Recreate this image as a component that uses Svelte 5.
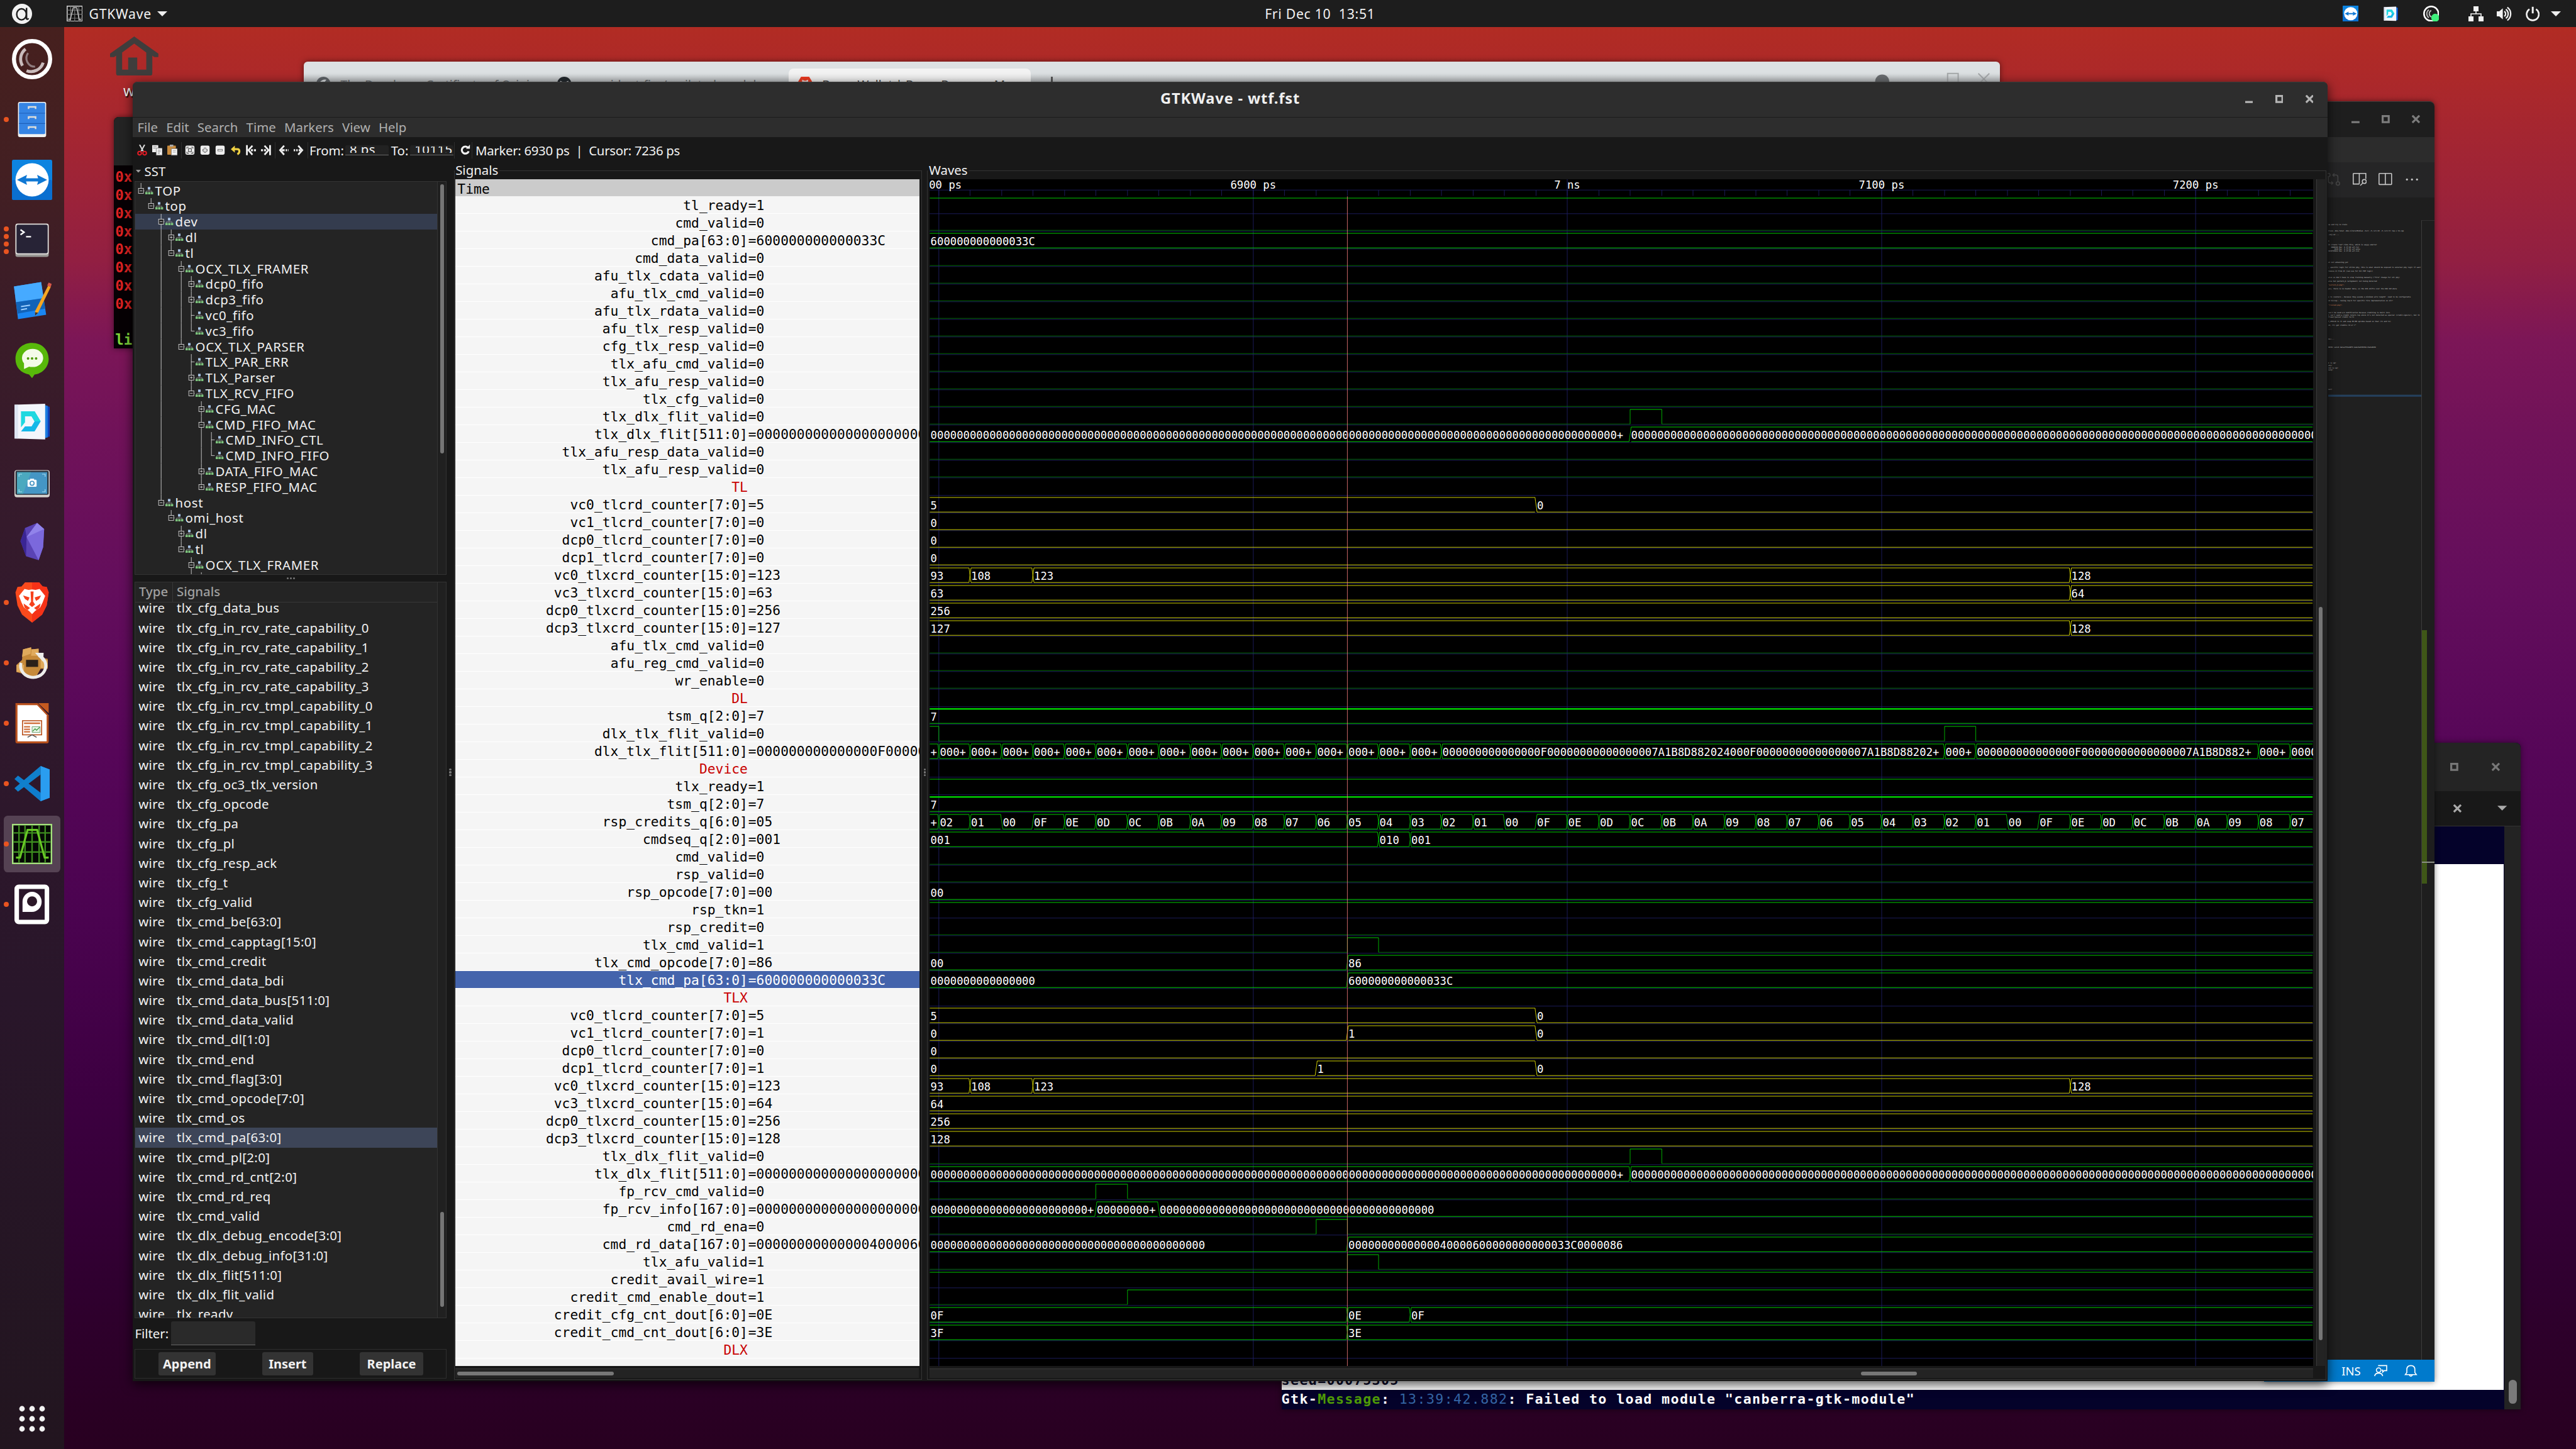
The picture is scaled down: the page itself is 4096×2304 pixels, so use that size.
<script>
  const dock = [
    { icon: 'ring', dots: 0 },
    { icon: 'files', dots: 1 },
    { icon: 'teamviewer', dots: 0 },
    { icon: 'terminal', dots: 4 },
    { icon: 'editor', dots: 0 },
    { icon: 'chat', dots: 0 },
    { icon: 'docs', dots: 0 },
    { icon: 'screenshot', dots: 0 },
    { icon: 'crystal', dots: 0 },
    { icon: 'brave', dots: 1 },
    { icon: 'packages', dots: 1 },
    { icon: 'impress', dots: 1 },
    { icon: 'vscode', dots: 1 },
    { icon: 'gtkwave', dots: 1, active: true },
    { icon: 'pbox', dots: 1 }
  ];

  const menus = ['File', 'Edit', 'Search', 'Time', 'Markers', 'View', 'Help'];

  // depth, kind (+ collapsed, - expanded, . leaf), name
  const tree = [
    [0, '-', 'TOP'], [1, '-', 'top'], [2, '-', 'dev'], [3, '+', 'dl'], [3, '-', 'tl'],
    [4, '-', 'OCX_TLX_FRAMER'], [5, '+', 'dcp0_fifo'], [5, '+', 'dcp3_fifo'], [5, '.', 'vc0_fifo'],
    [5, '.', 'vc3_fifo'], [4, '-', 'OCX_TLX_PARSER'], [5, '.', 'TLX_PAR_ERR'], [5, '+', 'TLX_Parser'],
    [5, '-', 'TLX_RCV_FIFO'], [6, '+', 'CFG_MAC'], [6, '-', 'CMD_FIFO_MAC'], [7, '.', 'CMD_INFO_CTL'],
    [7, '.', 'CMD_INFO_FIFO'], [6, '+', 'DATA_FIFO_MAC'], [6, '+', 'RESP_FIFO_MAC'], [2, '-', 'host'],
    [3, '-', 'omi_host'], [4, '+', 'dl'], [4, '-', 'tl'], [5, '-', 'OCX_TLX_FRAMER'],
    [6, '+', 'dcp0_fifo'], [5, '-', 'OCX_TLX_PARSER']
  ];
  const continues = (i, level) => {
    for (let j = i + 1; j < tree.length; j++) {
      if (tree[j][0] < level) return false;
      if (tree[j][0] === level) return true;
    }
    return false;
  };
  const treeRows = tree.slice(0, 26).map(([depth, kind, name], i) => {
    const guides = [];
    for (let l = 0; l < depth; l++) if (continues(i, l)) guides.push(11 + 20 * l);
    return { depth, kind, name, guides, more: continues(i, depth), x: 11 + 20 * depth };
  });

  const wires = [
    'tlx_cfg_data_bus', 'tlx_cfg_in_rcv_rate_capability_0', 'tlx_cfg_in_rcv_rate_capability_1',
    'tlx_cfg_in_rcv_rate_capability_2', 'tlx_cfg_in_rcv_rate_capability_3',
    'tlx_cfg_in_rcv_tmpl_capability_0', 'tlx_cfg_in_rcv_tmpl_capability_1',
    'tlx_cfg_in_rcv_tmpl_capability_2', 'tlx_cfg_in_rcv_tmpl_capability_3', 'tlx_cfg_oc3_tlx_version',
    'tlx_cfg_opcode', 'tlx_cfg_pa', 'tlx_cfg_pl', 'tlx_cfg_resp_ack', 'tlx_cfg_t', 'tlx_cfg_valid',
    'tlx_cmd_be[63:0]', 'tlx_cmd_capptag[15:0]', 'tlx_cmd_credit', 'tlx_cmd_data_bdi',
    'tlx_cmd_data_bus[511:0]', 'tlx_cmd_data_valid', 'tlx_cmd_dl[1:0]', 'tlx_cmd_end',
    'tlx_cmd_flag[3:0]', 'tlx_cmd_opcode[7:0]', 'tlx_cmd_os', 'tlx_cmd_pa[63:0]', 'tlx_cmd_pl[2:0]',
    'tlx_cmd_rd_cnt[2:0]', 'tlx_cmd_rd_req', 'tlx_cmd_valid', 'tlx_dlx_debug_encode[3:0]',
    'tlx_dlx_debug_info[31:0]', 'tlx_dlx_flit[511:0]', 'tlx_dlx_flit_valid', 'tlx_ready'
  ];

  const z = (n) => '0'.repeat(n);
  const START = 6797.1;
  const bit = (name, value, ...edges) => ({ name, value, kind: 'bit', edges });
  // cells: [time, text, zero?]
  const bus = (name, value, cells, color = 'g') => ({ name, value, kind: 'bus', cells, color });
  const group = (name) => ({ name, kind: 'group' });
  const S = START;

  const flitCells = [[S, '+']];
  for (let t = 6800; t < 6960; t += 10) flitCells.push([t, '000+']);
  flitCells.push(
    [6960, z(15) + 'F' + z(16) + '7A1B8D882024000F' + z(16) + '7A1B8D88202+'],
    [7120, '000+'], [7130, z(15) + 'F' + z(16) + '7A1B8D882+'], [7220, '000+'], [7230, '0000']
  );
  const creditCells = [[S, '+']];
  for (let k = 0; k < 44; k++) {
    const v = (((2 - k) % 16) + 16) % 16;
    creditCells.push([6800 + 10 * k, '0' + v.toString(16).toUpperCase(), v === 0]);
  }
  const crd123 = [[S, '93'], [6810, '108'], [6830, '123'], [7160, '128']];
  const crd5 = [[S, '5'], [6990, '0', true]];
  const flitOut = (firstZero) => [[S, z(105) + '+', firstZero], [7020, z(110)]];

  const signals = [
    bit('tl_ready', '1', [S, 1]),
    bit('cmd_valid', '0', [S, 0]),
    bus('cmd_pa[63:0]', '6' + z(12) + '33C', [[S, '6' + z(12) + '33C']]),
    bit('cmd_data_valid', '0', [S, 0]),
    bit('afu_tlx_cdata_valid', '0', [S, 0]),
    bit('afu_tlx_cmd_valid', '0', [S, 0]),
    bit('afu_tlx_rdata_valid', '0', [S, 0]),
    bit('afu_tlx_resp_valid', '0', [S, 0]),
    bit('cfg_tlx_resp_valid', '0', [S, 0]),
    bit('tlx_afu_cmd_valid', '0', [S, 0]),
    bit('tlx_afu_resp_valid', '0', [S, 0]),
    bit('tlx_cfg_valid', '0', [S, 0]),
    bit('tlx_dlx_flit_valid', '0', [S, 0], [7020, 1], [7030, 0]),
    bus('tlx_dlx_flit[511:0]', z(30), flitOut(true)),
    bit('tlx_afu_resp_data_valid', '0', [S, 0]),
    bit('tlx_afu_resp_valid', '0', [S, 0]),
    group('TL'),
    bus('vc0_tlcrd_counter[7:0]', '5', crd5, 'y'),
    bus('vc1_tlcrd_counter[7:0]', '0', [[S, '0', true]], 'y'),
    bus('dcp0_tlcrd_counter[7:0]', '0', [[S, '0', true]], 'y'),
    bus('dcp1_tlcrd_counter[7:0]', '0', [[S, '0', true]], 'y'),
    bus('vc0_tlxcrd_counter[15:0]', '123', crd123, 'y'),
    bus('vc3_tlxcrd_counter[15:0]', '63', [[S, '63'], [7160, '64']], 'y'),
    bus('dcp0_tlxcrd_counter[15:0]', '256', [[S, '256']], 'y'),
    bus('dcp3_tlxcrd_counter[15:0]', '127', [[S, '127'], [7160, '128']], 'y'),
    bit('afu_tlx_cmd_valid', '0', [S, 0]),
    bit('afu_reg_cmd_valid', '0', [S, 0]),
    bit('wr_enable', '0', [S, 0]),
    group('DL'),
    { ...bus('tsm_q[2:0]', '7', [[S, '7']]), thick: true },
    bit('dlx_tlx_flit_valid', '0', [S, 1], [6800, 0], [7120, 1], [7130, 0]),
    bus('dlx_tlx_flit[511:0]', z(15) + 'F' + z(12), flitCells),
    group('Device'),
    bit('tlx_ready', '1', [S, 1]),
    { ...bus('tsm_q[2:0]', '7', [[S, '7']]), thick: true },
    bus('rsp_credits_q[6:0]', '05', creditCells),
    bus('cmdseq_q[2:0]', '001', [[S, '001'], [6940, '010'], [6950, '001']]),
    bit('cmd_valid', '0', [S, 0]),
    bit('rsp_valid', '0', [S, 0]),
    bus('rsp_opcode[7:0]', '00', [[S, '00', true]]),
    bit('rsp_tkn', '1', [S, 1]),
    bit('rsp_credit', '0', [S, 0]),
    bit('tlx_cmd_valid', '1', [S, 0], [6930, 1], [6940, 0]),
    bus('tlx_cmd_opcode[7:0]', '86', [[S, '00', true], [6930, '86']]),
    { ...bus('tlx_cmd_pa[63:0]', '6' + z(12) + '33C', [[S, z(16), true], [6930, '6' + z(12) + '33C']]), selected: true },
    group('TLX'),
    bus('vc0_tlcrd_counter[7:0]', '5', crd5, 'y'),
    bus('vc1_tlcrd_counter[7:0]', '1', [[S, '0', true], [6930, '1'], [6990, '0', true]], 'y'),
    bus('dcp0_tlcrd_counter[7:0]', '0', [[S, '0', true]], 'y'),
    bus('dcp1_tlcrd_counter[7:0]', '1', [[S, '0', true], [6920, '1'], [6990, '0', true]], 'y'),
    bus('vc0_tlxcrd_counter[15:0]', '123', crd123, 'y'),
    bus('vc3_tlxcrd_counter[15:0]', '64', [[S, '64']], 'y'),
    bus('dcp0_tlxcrd_counter[15:0]', '256', [[S, '256']], 'y'),
    bus('dcp3_tlxcrd_counter[15:0]', '128', [[S, '128']], 'y'),
    bit('tlx_dlx_flit_valid', '0', [S, 0], [7020, 1], [7030, 0]),
    bus('tlx_dlx_flit[511:0]', z(30), flitOut(false)),
    bit('fp_rcv_cmd_valid', '0', [S, 0], [6850, 1], [6860, 0]),
    bus('fp_rcv_info[167:0]', z(30), [[S, z(24) + '+', true], [6850, z(8) + '+'], [6870, z(42), true]]),
    bit('cmd_rd_ena', '0', [S, 0], [6920, 1], [6930, 0]),
    bus('cmd_rd_data[167:0]', z(14) + '4' + z(4) + '6' + z(10),
      [[S, z(42), true], [6930, z(14) + '4' + z(4) + '6' + z(12) + '33C' + '0000086']]),
    bit('tlx_afu_valid', '1', [S, 0], [6930, 1], [6940, 0]),
    bit('credit_avail_wire', '1', [S, 1]),
    bit('credit_cmd_enable_dout', '1', [S, 0], [6860, 1]),
    bus('credit_cfg_cnt_dout[6:0]', '0E', [[S, '0F'], [6930, '0E'], [6950, '0F']]),
    bus('credit_cmd_cnt_dout[6:0]', '3E', [[S, '3F'], [6930, '3E']]),
    group('DLX')
  ];

  // Wave canvas: origin at its own top-left corner, 35px rows under a 34px ruler.
  const W = 2750;
  const H = 2359;
  const X = (t) => Math.max(0, Math.min(W, Math.round(18 + (t - 6800) * 6.246))) + 0.5;
  const rowTop = (n) => 34 + 35 * n;
  const majors = [6800, 6900, 7000, 7100, 7200];
  const ticks = Array.from({ length: 44 }, (_, k) => X(6800 + 10 * k));

  const drawn = signals.map((s, n) => {
    const hi = rowTop(n) + 3.5;
    const lo = rowTop(n) + 32.5;
    let high = '', low = '', edge = '', thick = '';
    const texts = [];
    if (s.kind === 'bit') {
      s.edges.forEach(([t, v], i) => {
        const x1 = X(t);
        const x2 = i + 1 < s.edges.length ? X(s.edges[i + 1][0]) : W;
        if (v) high += `M${x1} ${hi}H${x2}`;
        else low += `M${x1} ${lo}H${x2}`;
        if (i) edge += `M${x1} ${hi}V${lo}`;
      });
    } else if (s.kind === 'bus') {
      s.cells.forEach(([t, text, zero], i) => {
        const next = s.cells[i + 1];
        const x1 = X(t) + (i ? 2 : 0);
        const x2 = next ? X(next[0]) - 2 : W - 1;
        high += `M${x1} ${lo}H${x2}`;
        if (!zero) {
          high += `M${x1} ${hi}H${x2}`;
          if (s.thick) thick += `M${x1} ${hi + 0.5}H${x2}`;
        }
        if (next) {
          const c = X(next[0]);
          if (!zero) edge += `M${c - 2} ${hi}L${c - 1} ${hi + 8}L${c + 1} ${lo - 8}L${c + 2} ${lo}`;
          if (!next[2]) edge += `M${c - 2} ${lo}L${c - 1} ${lo - 8}L${c + 1} ${hi + 8}L${c + 2} ${hi}`;
        }
        texts.push({ x: X(t) + (i ? 2 : 1.5), y: rowTop(n) + 27, text });
      });
    }
    return { high, low, edge, thick, texts, color: s.color ?? 'g' };
  });

  const minimap = [
    [445, 'op and try to train'], [458, 'trace -Wno-fatal -Wno-LiteralEndian -Csrc -I./src/dl -I./src/tl top.v tb.cpp'],
    [465, '.obj/sd ...'], [478, 's'], [486, 'it create "vet"-like file, which is wayyy smaller'],
    [490, '   6000102 Dec  6 17:04 wtf.fst'], [494, '      4020 Dec  6 17:01 wtf.gtkw'], [498, '1634765012 Dec  6 17:03 wtf.vcd'],
    [521, 'ut not advancing yet'],
    [530, '; specific logic for xilinx phy; this is what should be exposed to external phy logic if want'],
    [538, 'remove it from dl (can use for Xil PHY logic)'],
    [550, 'also so don\'t have to step training manually ("fire" change for xil phy)'],
    [558, 'ates but pattern_b (alignment) not being detected'], [566, '"pattern_b.png">', 1],
    [573, 'yes, there is no header data; so the 64b shifts over the 66b hdr+data'],
    [589, 's to counters - because they assume a minimum wire length?  need to be configurable'],
    [597, 'nd hiccup - tuning req\'d for specific fire implementation on xil?'], [606, '"trained.png">', 1],
    [621, 'can\'t be used w/o modification because crediting is built into'],
    [625.5, 't can\'t send a credit return rsp since it\'s not detected as special (credit-ignore)), but th'],
    [629.6, 'framer/parser credit tx/rx'], [638, 'Y_APOLLO to tl and swap RC/RD opcodes based on that (rx and tx)'],
    [645, 'nd, tl) get credits rd or r^'], [673, 'dec...'], [689, '0033c set=4 data=731e6073 mem=3a33333bcc3a3e963b'],
    [721, 'k is up!'], [725.5, 'ady!'], [730, 'ink is up!'], [734, 'eady!'], [773, 'out!']
  ];
</script>

{#snippet teamviewer()}
  <rect width="80" height="80" rx="3" fill="#0d84e0" />
  <rect y="40" width="80" height="40" rx="3" fill="#0a6fd0" />
  <circle cx="40" cy="40" r="33" fill="#fff" />
  <path d="M10 40L30 30L28 37H52L50 30L70 40L50 50L52 43H28L30 50Z" fill="#0f78d4" />
{/snippet}

{#snippet docsIcon()}
  <path d="M62 8L75 11V70L62 74Z" fill="#0f3fb8" />
  <path d="M58 6L71 9V72L58 75Z" fill="#1c7ee0" />
  <path d="M5 7L66 5V76L5 74Z" fill="#f3f6fb" />
  <path d="M5 7H12V74H5Z" fill="#dde5f2" />
  <path d="M18 20H45L57 40L45 60H18L26 50H39L45 40L39 30H26Z" fill="#15b8e8" />
  <path d="M18 20H45L57 40H45L39 30H26L26 42L18 52Z" fill="#1fd8e0" />
{/snippet}

{#snippet dockIcon(name)}
  {#if name === 'ring'}
    <circle cx="40" cy="40" r="36" fill="none" stroke="#fff" stroke-width="8" />
    <path d="M27 20A25 25 0 0 0 21 53M62 47A25 25 0 0 1 29 63" fill="none" stroke="#c9bcbc" stroke-width="6" />
    <path d="M32 28A17 17 0 0 0 46 55" fill="none" stroke="#8f7c7e" stroke-width="4" />
  {:else if name === 'files'}
    <rect x="12" y="5" width="56" height="70" rx="4" fill="#f2f2f2" />
    <rect x="14" y="7" width="52" height="62" rx="2" fill="#3584e4" />
    <path d="M14 27.500H66M14 48H66" stroke="#1f5fb8" stroke-width="1.500" />
    {#each [15, 35, 55] as y}
      <path d="M33 {y + 4}V{y}H47V{y + 4}" fill="none" stroke="#deddda" stroke-width="3" />
    {/each}
  {:else if name === 'teamviewer'}
    {@render teamviewer()}
  {:else if name === 'terminal'}
    <rect x="7" y="8" width="66" height="65" rx="4" fill="#9a9996" />
    <rect x="7" y="7" width="66" height="61" rx="4" fill="#e4e2df" />
    <rect x="9" y="9" width="62" height="57" rx="3" fill="#272336" />
    <path d="M17 19L24 24L17 29M28 33H38" fill="none" stroke="#fff" stroke-width="3" />
  {:else if name === 'editor'}
    <path d="M4 12L58 3L68 68L12 77Z" fill="#1a86f2" />
    <path d="M4 12L58 3L63 35L8 43Z" fill="#46aaff" />
    <path d="M8 43L63 35L66 56L11 66Z" fill="#1263b8" />
    <path d="M18 52L36 49M18 58L30 56" stroke="#9fd0ff" stroke-width="2.500" />
    <path d="M72 10L77 13L52 64L46 70L46 61Z" fill="#f5a623" />
    <path d="M70 10L73 4L79 7L77 13Z" fill="#d8574a" />
    <path d="M46 63L52 64L46 70Z" fill="#3c2f2a" />
  {:else if name === 'chat'}
    <path d="M40 4C60 4 73 18 73 36C73 54 58 66 45 67L40 74L34 67C18 64 7 53 7 36C7 17 21 4 40 4Z" fill="#58b80a" />
    <ellipse cx="41" cy="34" rx="21" ry="18" fill="#f4fbe9" />
    <path d="M24 44L24 56L37 50Z" fill="#f4fbe9" />
    <circle cx="32" cy="35" r="2.500" fill="#4e9a06" /><circle cx="40" cy="35" r="2.500" fill="#4e9a06" /><circle cx="48" cy="35" r="2.500" fill="#4e9a06" />
  {:else if name === 'docs'}
    {@render docsIcon()}
  {:else if name === 'screenshot'}
    <rect x="5" y="17" width="70" height="54" rx="5" fill="#d6d3ce" />
    <rect x="7" y="18" width="66" height="48" rx="3" fill="#2b3540" />
    <rect x="10" y="21" width="60" height="43" fill="#4596c4" />
    <path d="M10 21H38L22 64H10Z" fill="#4fb0bd" opacity=".7" />
    <path d="M14 30V25H20M60 25H66V30M14 55V60H20M60 60H66V55" fill="none" stroke="#a8dcf0" stroke-width="1.500" />
    <rect x="31" y="36" width="18" height="14" rx="2" fill="#fff" /><rect x="36" y="34" width="8" height="4" fill="#fff" />
    <circle cx="40" cy="43" r="4" fill="#fff" stroke="#3f8fc0" stroke-width="2" />
  {:else if name === 'crystal'}
    <path d="M50 2L64 14L62 50L53 76L28 68L17 38L26 12Z" fill="#5a43b5" />
    <path d="M50 2L64 14L62 50L53 76L29 30Z" fill="#7b68dc" />
    <path d="M50 2L64 14L29 30Z" fill="#9183ea" />
    <path d="M26 12L29 30L28 68L17 38Z" fill="#3a2593" />
  {:else if name === 'brave'}
    <path d="M26 0H54L61 8L69 9L73 20L69 46L60 64L40 80L20 64L11 46L7 20L11 9L19 8Z" fill="#fb4a1c" />
    <path d="M54 0L61 8L69 9L73 20L69 46L60 64L40 80V0Z" fill="#f53218" />
    <path d="M25 13L33 15L40 14L47 15L55 13L66 27L61 40L56 50L46 57L40 63L34 57L24 50L19 40L14 27Z" fill="#fff" />
    <path d="M22 26L35 30L32 37L26 33ZM58 26L45 30L48 37L54 33ZM37 18H43L42 38L46 44L40 49L34 44L38 38ZM23 42L36 51L31 55L25 50ZM57 42L44 51L49 55L55 50Z" fill="#f6411c" />
  {:else if name === 'packages'}
    <path d="M22 13L38 9L39 13L53 12V28L58 30L71 32V52H57L50 64V70H30V64L9 58V44L20 34Z" fill="#c68a3a" />
    <path d="M22 13L38 9L37 22L20 28ZM39 13L53 12V26L38 26ZM9 44H24V58H9ZM57 34H71V50H57Z" fill="#e0aa5c" />
    <rect x="28" y="34" width="24" height="14" fill="#2b2119" />
    <path d="M53 25A25 23 0 1 1 18 40" fill="none" stroke="#ededeb" stroke-width="6" />
    <path d="M46 20L63 20L62 38Z" fill="#ededeb" />
  {:else if name === 'impress'}
    <path d="M7 0H51L73 24V77Q73 80 70 80H10Q7 80 7 77Z" fill="#b8501c" />
    <path d="M11 4H50L69 24V76H11Z" fill="#fff" />
    <path d="M52 0H73V20Z" fill="#c45a20" />
    <rect x="21" y="35" width="38" height="28" fill="none" stroke="#b8501c" stroke-width="2" />
    <path d="M24 40H56M24 47H36M24 52H36M24 57H36" stroke="#d0703c" stroke-width="3" />
    <rect x="40" y="47" width="16" height="11" fill="#e6f4e6" stroke="#5b8f5b" />
    <path d="M41 56L46 51L49 54L55 48" fill="none" stroke="#2f8f2f" stroke-width="1.500" />
    <path d="M31 68L40 63L49 68" fill="none" stroke="#555" stroke-width="2" />
  {:else if name === 'vscode'}
    <path d="M57 5L75 12V68L57 75L5 31L12 24L57 58Z" fill="#0f7ccc" />
    <path d="M57 5V22L12 56L5 49Z" fill="#1080cc" />
    <path d="M57 5L75 12V68L57 75Z" fill="#2a9df0" />
  {:else if name === 'gtkwave'}
    <rect x="1.500" y="1.500" width="77" height="77" fill="#050805" stroke="#a6e27e" stroke-width="3" />
    <path d="M14 3V77M26 3V77M40 3V77M54 3V77M66 3V77M3 18H77M3 36H77M3 56H77" stroke="#3c8a1e" stroke-width="3" />
    <path d="M8 67H16L31 12H50L65 67H73" fill="none" stroke="#69c926" stroke-width="4" />
  {:else if name === 'pbox'}
    <rect x="9.500" y="5" width="60" height="70" rx="4" fill="none" stroke="#fff" stroke-width="9" />
    <path d="M21 55V35A19 20 0 1 1 40 55Z" fill="#fff" />
    <circle cx="40" cy="34" r="10" fill="#2c1828" />
  {/if}
{/snippet}

{#snippet winButtons(minimize)}
  <div class="win-buttons">
    {#if minimize}<svg viewBox="0 0 16 16"><path d="M0 14H16" stroke-width="4" /></svg>{/if}
    <svg viewBox="0 0 16 16"><rect x="2" y="2" width="12" height="12" stroke-width="4" /></svg>
    <svg viewBox="0 0 16 16"><path d="M1 1L15 15M15 1L1 15" stroke-width="4" /></svg>
  </div>
{/snippet}

<div class="screen">
  <header class="topbar">
    <svg class="t-logo" viewBox="0 0 40 40">
      <circle cx="20" cy="20" r="20" fill="#f2f2f2" />
      <ellipse cx="19" cy="21" rx="9.500" ry="11" fill="#f2f2f2" stroke="#1d1d1d" stroke-width="3" />
      <path d="M29 8V30Q31 32 33 29" fill="none" stroke="#1d1d1d" stroke-width="3" />
    </svg>
    <svg class="t-app" viewBox="0 0 32 32">
      <rect x="1" y="1" width="30" height="30" fill="#111" stroke="#ccc" stroke-width="2" />
      <path d="M8 1V31M16 1V31M24 1V31M1 9H31M1 17H31M1 25H31" stroke="#777" stroke-width="1.500" />
      <path d="M3 28H7L13 4H20L25 28H29" fill="none" stroke="#bbb" stroke-width="2" />
    </svg>
    <span class="app-name">GTKWave</span>
    <svg class="caret" viewBox="0 0 20 10"><path d="M0 0H20L10 10Z" fill="#eee" /></svg>
    <div class="clock">Fri Dec 10&nbsp; 13:51</div>
    <div class="tray">
      <svg viewBox="0 0 80 80">{@render teamviewer()}</svg>
      <svg viewBox="0 0 80 80">{@render docsIcon()}</svg>
      <svg viewBox="0 0 80 80">
        <circle cx="40" cy="40" r="36" fill="none" stroke="#fff" stroke-width="8" />
        <path d="M28 20A25 25 0 0 0 28 60M40 24A18 18 0 0 0 40 56" fill="none" stroke="#bbb" stroke-width="6" />
        <circle cx="60" cy="60" r="20" fill="#3ff07c" />
      </svg>
      <svg viewBox="0 0 30 30" class="net">
        <path d="M10 0H20V10H10ZM0 20H10V30H0ZM20 20H30V30H20Z" fill="#f2f2f2" />
        <path d="M15 10V15M5 20V15H25V20" fill="none" stroke="#f2f2f2" stroke-width="2" />
      </svg>
      <svg viewBox="0 0 30 30" class="vol">
        <path d="M0 10H5L12 4V26L5 20H0Z" fill="#f2f2f2" />
        <path d="M15 10A6 6 0 0 1 15 20M18 6A11 11 0 0 1 18 24M21 2A16 16 0 0 1 21 28" fill="none" stroke="#f2f2f2" stroke-width="2.800" />
      </svg>
      <svg viewBox="0 0 30 30" class="pow">
        <path d="M8 5A13 13 0 1 0 22 5" fill="none" stroke="#f2f2f2" stroke-width="3.500" />
        <path d="M15 0V14" stroke="#f2f2f2" stroke-width="4" />
      </svg>
      <svg viewBox="0 0 20 10" class="caret"><path d="M0 0H20L10 10Z" fill="#eee" /></svg>
    </div>
  </header>

  <nav class="dock">
    {#each dock as app}
      <div class="dock-item" class:active={app.active}>
        <span class="run-dots">{#each Array(app.dots) as _}<i></i>{/each}</span>
        <svg viewBox="0 0 80 80">{@render dockIcon(app.icon)}</svg>
      </div>
    {/each}
    <div class="dock-item apps">
      <svg viewBox="0 0 80 80">
        {#each [20, 40, 60] as y}{#each [20, 40, 60] as x}<circle cx={x} cy={y} r="5.500" fill="#f2f2f2" />{/each}{/each}
      </svg>
    </div>
  </nav>

  <div class="home-icon">
    <svg viewBox="0 0 96 78">
      <path d="M48 0L96 34V41H88L84 38V73Q84 78 79 78H17Q12 78 12 73V38L8 41H0V34ZM48 14L24 32V66H36V42H54V66H72V32Z" fill="#3f3d3c" />
    </svg>
    <span>wtf</span>
  </div>

  <section class="window browser">
    <div class="tab"><svg viewBox="0 0 28 28"><circle cx="14" cy="14" r="14" fill="#5f6368" /><path d="M6 12Q12 4 20 6L14 14L10 24Q5 18 6 12Z" fill="#dde1e3" /></svg><span>The Developer Certificate of Origin</span></div>
    <div class="tab second"><svg viewBox="0 0 28 28"><circle cx="14" cy="14" r="14" fill="#24292e" /><path d="M6 8L10 10H18L22 8V17Q14 26 6 17Z" fill="#dde1e3" /></svg><span>openident-fire/verilated-model</span></div>
    <div class="tab current"><svg viewBox="0 0 28 28"><path d="M6 0H22L28 10L14 28L0 10Z" fill="#ef3a20" /><path d="M8 6L14 8L20 6V14L14 20L8 14Z" fill="#f3d9d5" /></svg><span>Brave Wallet | Brave Browser: My</span></div>
    <i class="plus"></i>
    <svg class="b-controls" viewBox="0 0 230 30"><circle cx="16" cy="22" r="14" fill="#6a6d70" /><rect x="146" y="6" width="21" height="21" fill="none" stroke="#a6a9ab" stroke-width="2.500" /><path d="M207 6L229 28M229 6L207 28" stroke="#a6a9ab" stroke-width="2.500" /></svg>
  </section>

  <section class="window back-term">
    <div class="bt-head"></div>
    <div class="bt-body">
      {#each Array(8) as _}<span>0x</span>{/each}
      <span></span>
      <span class="green">li</span>
    </div>
  </section>

  <section class="window term">
    <div class="term-title">{@render winButtons(false)}</div>
    <div class="term-tabs">
      <svg viewBox="0 0 16 16"><path d="M1 1L15 15M15 1L1 15" stroke="#aaa" stroke-width="4" /></svg>
      <svg viewBox="0 0 20 10" class="caret"><path d="M0 0H20L10 10Z" fill="#aaa" /></svg>
    </div>
    <div class="term-body">
      <div class="term-text">
        <div class="white"><span>seed=00075305</span></div>
        <div class="msg"><b>Gtk-</b><b class="ok">Message</b><b>{': '}</b><span class="time">13:39:42.882</span><b>{': Failed to load module "canberra-gtk-module"'}</b></div>
      </div>
      <div class="term-scroll"><i></i></div>
    </div>
  </section>

  <section class="window code">
    <div class="code-title">{@render winButtons(true)}</div>
    <div class="code-menu"></div>
    <div class="code-tabs">
      <svg class="dim" viewBox="0 0 26 26"><circle cx="3" cy="4" r="3.500" /><path d="M3 8V16Q3 20 7 20H12M9 17L12 20L9 23M22 17V8Q22 4 18 4H12M15 1L12 4L15 7" /><circle cx="22" cy="21" r="3.500" /></svg>
      <svg viewBox="0 0 28 26"><path d="M1 1H26V12M13 1V22M1 1V22H13" /><circle cx="23" cy="17" r="4" /><path d="M20 20L15 25" /></svg>
      <svg viewBox="0 0 28 26"><rect x="1" y="1" width="25" height="22" rx="1" /><path d="M13.500 1V23" /></svg>
      <svg viewBox="0 0 28 26" class="more"><circle cx="4" cy="13" r="2" /><circle cx="14" cy="13" r="2" /><circle cx="24" cy="13" r="2" /></svg>
    </div>
    <div class="code-body">
      <svg class="minimap" viewBox="4627 392 186 2310">
        <rect x="4627" y="788" width="186" height="1914" fill="#202020" />
        <rect x="4627" y="784" width="186" height="4" fill="#25405c" />
        {#each minimap as [y, text, orange]}
          <text x="4627" y={y + 1.500} class:orange>{text}</text>
        {/each}
      </svg>
      <div class="ruler"><i class="change"></i><i class="cursor"></i></div>
    </div>
    <footer class="status">
      <span>INS</span>
      <svg viewBox="0 0 26 26"><circle cx="9" cy="12" r="4.500" /><path d="M1 24Q2 18 9 18T17 24M8 3H25V13H20L17 16V12H15" /></svg>
      <svg viewBox="0 0 26 26"><path d="M2 21H24L21 17V11Q21 3 13 3T5 11V17ZM10 22Q13 26 16 22" /></svg>
    </footer>
  </section>

  <section class="window gtk">
    <div class="gtk-title"><h1>GTKWave - wtf.fst</h1>{@render winButtons(true)}</div>
    <nav class="menubar">{#each menus as m}<span>{m}</span>{/each}</nav>
    <div class="toolbar">
      <svg viewBox="0 0 20 22"><path d="M5 0L12 13M15 0L8 13" stroke="#ddd" stroke-width="2.500" /><circle cx="5" cy="17" r="3.500" fill="none" stroke="#e01b24" stroke-width="2.500" /><circle cx="15" cy="17" r="3.500" fill="none" stroke="#e01b24" stroke-width="2.500" /></svg>
      <svg viewBox="0 0 20 22"><path d="M0 1H12V15H0Z" fill="#eee" /><path d="M8 7H20V21H8Z" fill="#f4f4f4" stroke="#777" /><path d="M2 4H9M2 7H7M11 11H17M11 14H17M11 17H15" stroke="#888" stroke-width="1.200" /></svg>
      <svg viewBox="0 0 20 22"><rect y="2" width="17" height="18" rx="1" fill="#c88a3c" /><rect x="5" width="7" height="4" fill="#aaa" /><path d="M8 8H20V21H8Z" fill="#f4f4f4" stroke="#777" /><path d="M11 12H17M11 15H17" stroke="#999" /></svg>
      <i class="sep"></i>
      <svg viewBox="0 0 20 22"><rect x="1" y="2" width="18" height="18" rx="3" fill="#eee" /><path d="M4 8V5H8M12 5H16V8M16 14V17H12M8 17H4V14M7 8H13V14H7Z" fill="none" stroke="#555" stroke-width="1.500" /></svg>
      <svg viewBox="0 0 20 22"><rect x="1" y="2" width="18" height="18" rx="3" fill="#eee" /><path d="M10 6V16M5 11H15" stroke="#555" stroke-width="4" /><path d="M10 7V15M6 11H14" stroke="#fff" stroke-width="2" /></svg>
      <svg viewBox="0 0 20 22"><rect x="1" y="2" width="18" height="18" rx="3" fill="#eee" /><path d="M5 11H15" stroke="#555" stroke-width="4" /><path d="M6 11H14" stroke="#fff" stroke-width="2" /></svg>
      <svg viewBox="0 0 20 22"><path d="M8 2V16L0 9Z" fill="#f0d040" /><path d="M6 9H13Q17 9 17 13T13 19" fill="none" stroke="#edd045" stroke-width="4" /></svg>
      <svg viewBox="0 0 20 22"><path d="M2 1V21M13 2L5 11L13 20" fill="none" stroke="#eee" stroke-width="3.500" /><path d="M10 11H20" stroke="#eee" stroke-width="4" stroke-dasharray="4 2" /></svg>
      <svg viewBox="0 0 20 22"><path d="M18 1V21M7 2L15 11L7 20" fill="none" stroke="#eee" stroke-width="3.500" /><path d="M0 11H10" stroke="#eee" stroke-width="4" stroke-dasharray="4 2" /></svg>
      <i class="sep"></i>
      <svg viewBox="0 0 20 22"><path d="M11 2L3 11L11 20" fill="none" stroke="#eee" stroke-width="3.500" /><path d="M6 11H20" stroke="#eee" stroke-width="4" stroke-dasharray="6 2 3 2" /></svg>
      <svg viewBox="0 0 20 22"><path d="M9 2L17 11L9 20" fill="none" stroke="#eee" stroke-width="3.500" /><path d="M0 11H14" stroke="#eee" stroke-width="4" stroke-dasharray="3 2 3 2 7" /></svg>
      <i class="sep tight"></i>
      <label class="from">From:</label><div class="entry"><span>8 ps</span></div>
      <label class="to">To:</label><div class="entry"><span>10115</span></div>
      <i class="sep"></i>
      <svg class="reload" viewBox="0 0 20 22"><path d="M15 6A7 7 0 1 0 16.500 13" fill="none" stroke="#f2f2f2" stroke-width="4" /><path d="M11 8H19V0Z" fill="#f2f2f2" /></svg>
      <i class="sep"></i>
      <span class="marker">Marker: 6930 ps&nbsp; |&nbsp; Cursor: 7236 ps</span>
    </div>

    <div class="panes">
      <aside class="left">
        <div class="sst"><svg viewBox="0 0 10 6"><path d="M0 0H10L5 6Z" fill="#999" /></svg>SST</div>
        <div class="tree-frame">
          <div class="tree">
            {#each treeRows as row, i}
              <div class="tree-row" class:selected={i === 2}>
                <svg width={39 + 20 * row.depth} height="31">
                  {#each row.guides as gx}<path d="M{gx + 0.500} 0V31" />{/each}
                  <path d="M{row.x + 0.500} 0V{row.more ? 31 : 15.500}" />
                  <path d="M{row.x} 15.500H{row.x + 7}" />
                  {#if row.kind !== '.'}
                    <rect x={row.x - 4.500} y="10.500" width="10" height="10" fill="#242424" />
                    <path d={`M${row.x - 2} 15.5H${row.x + 3}` + (row.kind === '+' ? `M${row.x + 0.5} 13V18` : '')} />
                  {/if}
                  <rect class="blue" x={row.x + 14} y="8" width="5" height="5" />
                  <path class="link" d="M{row.x + 16.500} 13V16M{row.x + 11} 19V16H{row.x + 22}V19" />
                  <rect class="leaf" x={row.x + 9} y="18" width="4.500" height="4.500" />
                  <rect class="leaf" x={row.x + 14.500} y="18" width="4.500" height="4.500" />
                  <rect class="leaf" x={row.x + 20} y="18" width="4.500" height="4.500" />
                </svg>
                <span>{row.name}</span>
              </div>
            {/each}
          </div>
          <div class="vtrack"><i class="tree-thumb"></i></div>
        </div>
        <div class="h-handle"><i></i><i></i><i></i></div>
        <div class="table-frame">
          <div class="table">
            <div class="table-head"><span>Type</span><span>Signals</span></div>
            <div class="table-body">
              {#each wires as w, i}
                <div class="wire" class:selected={i === 27}><span>wire</span><span>{w}</span></div>
              {/each}
            </div>
          </div>
          <div class="vtrack"><i class="wire-thumb"></i></div>
        </div>
        <div class="filter"><span>Filter:</span><div class="filter-entry"></div></div>
        <div class="actions"><button>Append</button><button>Insert</button><button>Replace</button></div>
      </aside>

      <i class="v-handle one"><b></b><b></b><b></b></i>
      <div class="frame signals">
        <span class="legend">Signals</span>
        <div class="sig-list">
          <div class="sig-head">Time</div>
          {#each signals as s}
            <div class="sig-row" class:group={s.kind === 'group'} class:selected={s.selected}>
              <span class="sig-name">{s.name}</span><span class="sig-value">{s.kind === 'group' ? '' : '=' + s.value}</span>
            </div>
          {/each}
        </div>
        <div class="htrack"><i class="sig-thumb"></i></div>
      </div>

      <i class="v-handle two"><b></b><b></b><b></b></i>
      <div class="frame waves">
        <span class="legend">Waves</span>
        <div class="wave-row">
          <svg class="canvas" viewBox="0 0 {W} {H}" width={W} height={H}>
            <rect width={W} height={H} fill="#000" />
            <g class="grid">
              {#each majors as t}<path d="M{X(t)} 0V{H}" />{/each}
              {#each ticks as x}<path d="M{x} 21.500V33" />{/each}
              <path d="M0 21.500H{W}" />
              {#each signals as _, n}<path d="M0 {rowTop(n) + 34.500}H{W}" />{/each}
            </g>
            {#each drawn as row}
              <g class={row.color}>
                {#if row.low}<path class="low" d={row.low} />{/if}
                {#if row.edge}<path class="edge" d={row.edge} />{/if}
                {#if row.high}<path class="high" d={row.high} />{/if}
                {#if row.thick}<path class="high thick" d={row.thick} />{/if}
              </g>
              {#each row.texts as t}<text x={t.x} y={t.y}>{t.text}</text>{/each}
            {/each}
            {#each majors as t}
              {@const label = t === 7000 ? '7 ns' : t + ' ps'}
              <text x={X(t) - label.length * 6.500} y="19">{label}</text>
            {/each}
            <path class="marker-line" d="M{X(6930)} 34V{H}" />
          </svg>
          <div class="vtrack wide"><i class="wave-thumb"></i></div>
        </div>
        <div class="htrack"><i class="wave-hthumb"></i></div>
      </div>
    </div>
  </section>
</div>

<style>
  :global(body) { margin: 0; overflow: hidden; background: #2a0020; }
  .screen {
    zoom: 0.8;
    position: relative;
    width: 5120px;
    height: 2880px;
    overflow: hidden;
    font-family: "Noto Sans", "Open Sans", sans-serif;
    font-size: 25.5px;
    color: #f2f2f2;
    background: linear-gradient(to bottom, #b42d20 0, #ad2929 5%, #9d2338 13%, #921f42 18%, #7c1657 23.5%, #701259 30%, #640e5c 40%, #560658 52%, #4b0350 63%, #3c0040 76%, #300030 88%, #280020 100%);
  }
  .screen :global(svg) { display: block; flex: none; }
  span { white-space: pre; }

  .topbar { display: flex; align-items: center; height: 54px; background: #1d1d1d; position: relative; font-size: 26.500px; letter-spacing: .9px; }
  .t-logo { width: 40px; height: 40px; margin-left: 24px; }
  .t-app { width: 32px; height: 32px; margin-left: 68px; }
  .app-name { margin-left: 13px; width: 128px; }
  .caret { width: 20px; height: 10px; margin-left: 8px; }
  .clock { margin-left: 2181px; white-space: pre; }
  .tray { display: flex; align-items: center; margin-left: auto; padding-right: 30px; }
  .tray svg { width: 32px; height: 32px; margin-right: 48px; }
  .tray .net { width: 30px; height: 30px; margin-left: 10px; margin-right: 26px; }
  .tray .vol { width: 30px; height: 30px; margin-right: 28px; }
  .tray .pow { width: 28px; height: 30px; margin-right: 22px; }
  .tray .caret { width: 20px; height: 10px; margin: 0; }

  .dock {
    position: absolute; left: 0; top: 54px; width: 128px; height: 2822px; padding-top: 4px;
    display: flex; flex-direction: column;
    background: linear-gradient(to bottom, #46201e 0, #431f22 10%, #3b1c28 20%, #351a2c 35%, #2d172b 55%, #29162a 68%, #22151f 100%);
  }
  .dock-item { height: 112px; margin: 4px 8px; display: flex; align-items: center; justify-content: center; position: relative; border-radius: 8px; }
  .dock-item svg { width: 80px; height: 80px; }
  .dock-item.active { background: #554253; }
  .dock-item.apps { margin-top: auto; }
  .run-dots { position: absolute; left: 0; top: 0; height: 112px; display: flex; flex-direction: column; justify-content: center; gap: 5px; }
  .run-dots i { width: 10px; height: 10px; border-radius: 5px; background: #e95420; }

  .home-icon { position: absolute; left: 219px; top: 72px; width: 96px; display: flex; flex-direction: column; align-items: flex-start; }
  .home-icon svg { width: 96px; height: 78px; }
  .home-icon span { margin: 10px 0 0 26px; font-size: 29px; text-shadow: 2px 2px 2px #000; }

  .window { position: absolute; box-sizing: border-box; box-shadow: 0 0 12px rgba(0, 0, 0, .5); }
  .win-buttons { display: flex; gap: 44px; }
  .win-buttons svg { width: 16px; height: 16px; fill: none; stroke: currentColor; }

  .browser {
    left: 604px; top: 122px; width: 3371px; height: 60px; border-radius: 8px 8px 0 0; overflow: hidden;
    display: flex; align-items: flex-start; background: linear-gradient(#dde1e3 40%, #b8bcbe 68%);
    color: #6a6d70; font-size: 24px;
  }
  .tab { display: flex; width: 450px; padding: 31px 0 0 25px; gap: 20px; box-sizing: border-box; overflow: hidden; margin-right: 28px; }
  .tab svg { width: 28px; height: 28px; }
  .tab.second { width: 460px; padding-left: 26px; margin-right: 0; }
  .tab.current { width: 481px; margin: 14px 0 0 26px; padding-top: 17px; padding-left: 18px; background: linear-gradient(#f3f3f3 40%, #dcdcdc 80%); border-radius: 10px 10px 0 0; height: 50px; color: #444; }
  .tab span { line-height: 32px; }
  .plus { width: 3px; height: 30px; margin: 31px 0 0 40px; background: #555; }
  .b-controls { width: 230px; height: 30px; margin: 18px 20px 0 auto; }

  .back-term { left: 226px; top: 233px; width: 200px; height: 460px; border-radius: 10px 0 0 0; background: #060104; overflow: hidden; }
  .bt-head { height: 96px; background: #242424; }
  .bt-body { padding: 5px 3px; display: flex; flex-direction: column; font: bold 28px/36px "DejaVu Sans Mono", monospace; color: #dd2222; }
  .bt-body span { height: 36px; }
  .bt-body .green { color: #7fd63a; }

  .term { left: 2547px; top: 1476px; width: 2463px; height: 1325px; display: flex; flex-direction: column; border-radius: 10px 10px 0 0; background: #04022a; }
  .term-title { height: 96px; display: flex; align-items: center; justify-content: flex-end; padding-right: 41px; background: #242424; color: #777; border-radius: 10px 10px 0 0; }
  .term-title .win-buttons { gap: 67px; }
  .term-tabs { height: 70px; display: flex; align-items: center; justify-content: flex-end; background: #181818; border-bottom: 1px solid #333; padding-right: 27px; gap: 72px; }
  .term-tabs svg { width: 16px; height: 16px; }
  .term-tabs .caret { width: 19px; height: 10px; margin: 0; }
  .term-body { flex: 1; display: flex; }
  .term-text { flex: 1; display: flex; flex-direction: column; font: bold 27px/36px "DejaVu Sans Mono", monospace; letter-spacing: 1.74px; white-space: pre; }
  .white { margin: 75px 2px 0 0; height: 1044px; display: flex; align-items: flex-end; background: #fff; color: #0a0a2a; }
  .white span { height: 36px; }
  .msg { height: 39px; line-height: 38px; color: #fff; }
  .msg .ok { color: #4e9a06; }
  .msg .time { color: #3465a4; font-weight: 400; }
  .term-scroll { width: 32px; background: #232323; display: flex; align-items: flex-end; justify-content: center; }
  .term-scroll i { width: 16px; height: 48px; margin-bottom: 11px; border-radius: 8px; background: #7a7a7a; }

  .code { left: 4500px; top: 201px; width: 339px; height: 2545px; display: flex; flex-direction: column; border-radius: 0 10px 0 0; background: #1e1e1e; border-top: 1px solid #3a3a3a; }
  .code-title { height: 70px; display: flex; align-items: center; justify-content: flex-end; padding-right: 29px; color: #7c7c7c; }
  .code-menu { height: 50px; background: #2c2c2c; }
  .code-tabs { height: 70px; display: flex; align-items: center; justify-content: flex-end; gap: 24px; padding-right: 31px; background: #252526; }
  .code-tabs svg { width: 28px; height: 26px; fill: none; stroke: #c5c5c5; stroke-width: 2; }
  .code-tabs .dim { stroke: #454545; }
  .code-tabs .more { fill: #c5c5c5; stroke: none; }
  .code-body { flex: 1; display: flex; justify-content: flex-end; min-height: 0; }
  .minimap { width: 186px; height: 2310px; }
  .minimap text { font: bold 3.3px "DejaVu Sans Mono", monospace; fill: #a4a4a4; white-space: pre; }
  .minimap .orange { fill: #b8704c; }
  .ruler { width: 26px; margin-top: 45px; border-left: 1px solid #3c3c3c; border-top: 1px solid #303030; box-sizing: border-box; display: flex; flex-direction: column; }
  .ruler .change { width: 9px; height: 504px; margin-top: 814px; background: #3f5717; }
  .ruler .cursor { height: 3px; margin-top: -44px; background: #8b8f86; }
  .status { height: 44px; display: flex; align-items: center; padding-left: 154px; background: #007acc; font-size: 23px; color: #fff; }
  .status span { width: 73px; }
  .status svg { width: 26px; height: 26px; fill: none; stroke: #fff; stroke-width: 2; margin-right: 34px; }

  .gtk { left: 264px; top: 162px; width: 4362px; height: 2583px; display: flex; flex-direction: column; border-radius: 10px 10px 0 0; background: #181818; box-shadow: 0 6px 22px rgba(0, 0, 0, .7); }
  .gtk-title { height: 72px; box-sizing: border-box; display: grid; grid-template-columns: 1fr auto 1fr; align-items: center; background: #2d2d2d; border-top: 2px solid #3b3b3b; border-bottom: 1px solid #1b1b1b; border-radius: 10px 10px 0 0; color: #b4b4b4; padding-bottom: 2px; }
  .gtk-title h1 { grid-column: 2; margin: 0 0 4px; font-size: 29.500px; font-weight: 700; letter-spacing: 1.100px; color: #f0f0f0; white-space: pre; }
  .gtk-title .win-buttons { justify-content: flex-end; padding-right: 28px; }
  .menubar { height: 39px; box-sizing: border-box; padding-bottom: 2px; display: flex; align-items: center; gap: 16.500px; padding-left: 9px; background: #2d2d2d; color: #b0b0b0; }
  .toolbar { height: 52px; display: flex; align-items: center; padding-left: 8px; }
  .toolbar svg { width: 20px; height: 22px; margin-right: 10.200px; }
  .sep { width: 1px; height: 32px; margin: 0 7px 0 -3px; background: #2e2e2e; flex: none; }
  .sep.tight { margin-right: 3px; }
  .toolbar .from { width: 71px; letter-spacing: -.2px; }
  .toolbar .to { width: 38px; }
  .toolbar label { white-space: pre; flex: none; }
  .entry { width: 86px; height: 19px; margin-right: 5px; overflow: hidden; background: #222; border-bottom: 1px solid #666; border-radius: 3px 3px 0 0; display: flex; flex: none; }
  .entry span { height: 12px; margin: 3px 0 0 9px; overflow: hidden; line-height: 12px; letter-spacing: .5px; }
  .toolbar .reload { margin: 0 6px 0 4px; }
  .marker { margin-left: -1px; letter-spacing: -.4px; }

  .panes { flex: 1; display: flex; position: relative; min-height: 0; }
  .left { width: 638px; box-sizing: border-box; padding: 0 14px 0 4px; display: flex; flex-direction: column; }
  .sst { height: 35px; display: flex; align-items: center; gap: 7px; padding-left: 2px; line-height: 30px; padding-bottom: 5px; box-sizing: border-box; }
  .sst svg { width: 10px; height: 6px; }
  .tree-frame, .table-frame { display: flex; border: 1px solid #333; box-sizing: border-box; overflow: hidden; flex: none; }
  .tree-frame { height: 782px; }
  .tree { flex: 1; background: #242424; padding-top: 2px; letter-spacing: .8px; }
  .tree-row { display: flex; height: 31px; line-height: 30px; }
  .tree-row svg { fill: none; stroke: #e8e8e8; stroke-width: 1; }
  .tree-row .blue { fill: #a9c4e6; stroke: none; }
  .tree-row .leaf { fill: #7cc47c; stroke: none; }
  .tree-row .link { stroke: #9a9a9a; }
  .selected { background: #343c4e; }
  .vtrack { width: 18px; display: flex; justify-content: center; background: #202020; border-left: 1px solid #333; box-sizing: border-box; }
  .vtrack i { width: 8px; border-radius: 4px; background: #757575; }
  .tree-thumb { height: 535px; margin-top: 5px; }
  .wire-thumb { height: 189px; margin-top: 1251px; }
  .h-handle { height: 14px; display: flex; justify-content: center; align-items: center; gap: 2px; flex: none; }
  .h-handle i, .v-handle b { width: 4px; height: 4px; border-radius: 2px; background: #777; }
  .table-frame { height: 1464px; }
  .table { flex: 1; background: #242424; display: flex; flex-direction: column; min-height: 0; }
  .table-head { display: flex; height: 40px; line-height: 36px; color: #a0a0a0; font-weight: 500; border-bottom: 1px solid #383838; box-sizing: border-box; flex: none; }
  .table-head span:first-child { width: 75px; box-sizing: border-box; padding-left: 7px; border-right: 1px solid #383838; }
  .table-head span:last-child { padding-left: 7px; }
  .table-body { flex: 1; overflow: hidden; min-height: 0; letter-spacing: .45px; }
  .wire { display: flex; height: 39px; line-height: 39px; }
  .wire:first-child { margin-top: -8px; }
  .wire span:first-child { width: 76px; padding-left: 6px; }
  .wire.selected { background: #3d4558; }
  .filter { height: 61px; display: flex; align-items: center; }
  .filter span { width: 72px; }
  .filter-entry { width: 168px; height: 46px; background: #2a2a2a; border-bottom: 1px solid #666; border-radius: 4px 4px 0 0; }
  .actions { height: 59px; display: flex; align-items: center; border: 1px solid #2e2e2e; box-sizing: border-box; padding-left: 46px; }
  .actions button { height: 47px; border: 0; border-radius: 4px; background: #333; color: #f2f2f2; font: bold 25px "Noto Sans", sans-serif; padding: 0; }
  .actions button:nth-child(1) { width: 113px; margin-right: 93px; }
  .actions button:nth-child(2) { width: 101px; margin-right: 93px; }
  .actions button:nth-child(3) { width: 126px; }

  .v-handle { position: absolute; top: 1202px; display: flex; flex-direction: column; gap: 2px; }
  .v-handle.one { left: 629px; }
  .v-handle.two { left: 1572px; }
  .frame { position: relative; margin-top: 14px; margin-bottom: 3px; border: 1px solid #343434; box-sizing: border-box; padding: 16px 2px 0; display: flex; flex-direction: column; }
  .legend { position: absolute; left: 0; top: -18px; padding: 0 2px; background: #181818; line-height: 32px; }
  .signals { width: 930px; padding-right: 4px; }
  .waves { width: 2781px; margin-left: 11px; padding-left: 3px; }
  .sig-list { height: 2359px; width: 922px; overflow: hidden; background: #f5f5f5; color: #000; font: 26.600px "DejaVu Sans Mono", monospace; letter-spacing: .05px; }
  .sig-head { height: 34px; line-height: 41px; padding-left: 4px; box-sizing: border-box; background: #cbcbcb; overflow: hidden; }
  .sig-row { display: grid; grid-template-columns: 581px 1fr; height: 35px; line-height: 38px; box-sizing: border-box; border-bottom: 1px solid #fff; }
  .sig-name { text-align: right; }
  .sig-value { padding-left: 1px; }
  .sig-row.group { color: #c80000; }
  .sig-row.selected { background: #4464ac; color: #fff; }
  .htrack { height: 19px; margin-top: 5px; display: flex; align-items: center; background: #232323; border-top: 1px solid #3a3a3a; box-sizing: border-box; }
  .waves .htrack { width: 2750px; }
  .htrack i { height: 8px; border-radius: 4px; background: #777; }
  .sig-thumb { width: 311px; margin-left: 4px; }
  .wave-hthumb { width: 112px; margin-left: 1851px; }
  .wave-row { display: flex; height: 2359px; }
  .vtrack.wide { margin-left: 6px; width: 18px; border-left: 2px solid #3a3a3a; background: #232323; }
  .wave-thumb { height: 1458px; margin-top: 850px; }

  .canvas text { font: 21.500px "DejaVu Sans Mono", monospace; letter-spacing: .056px; fill: #fff; white-space: pre; }
  .canvas path { fill: none; stroke-width: 1; }
  .grid path { stroke: #22226e; }
  .g .high { stroke: #00ff00; }
  .g .low { stroke: #008000; }
  .g .edge { stroke: #00d800; }
  .y .high { stroke: #ffff00; }
  .y .edge { stroke: #ffff00; }
  .canvas .thick { stroke-width: 2; }
  .canvas .marker-line { stroke: #ff8080; }
</style>
